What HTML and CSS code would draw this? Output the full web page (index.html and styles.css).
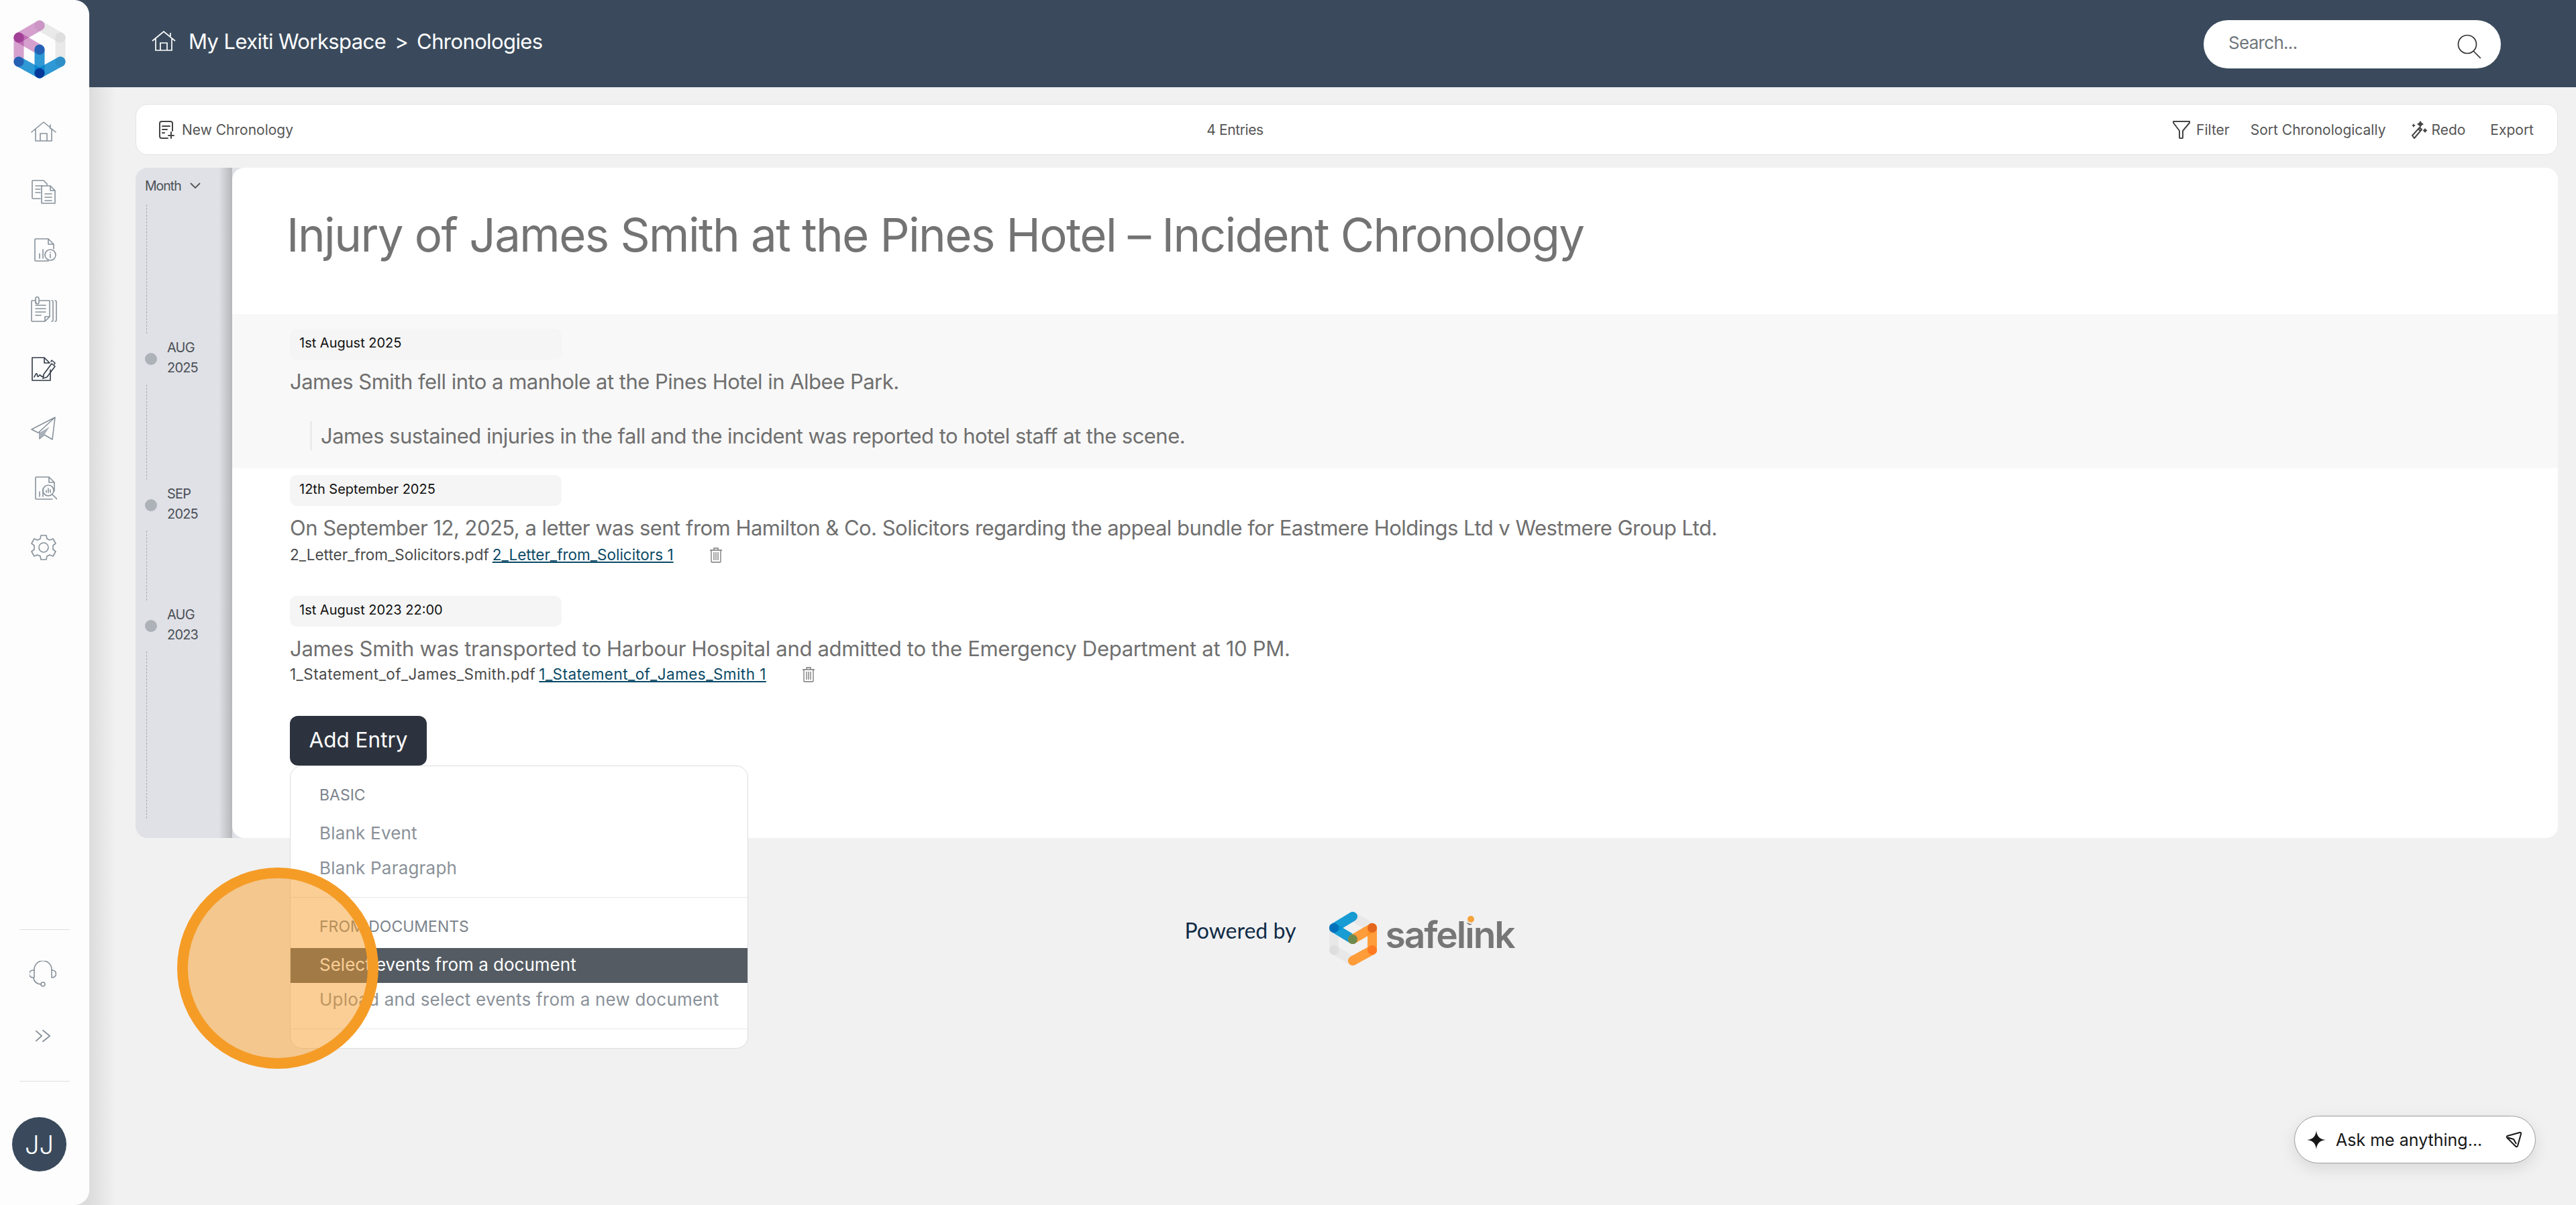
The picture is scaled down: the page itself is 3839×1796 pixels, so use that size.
FILE: index.html
```html
<!DOCTYPE html>
<html lang="en">
<head>
<meta charset="utf-8">
<title>Chronologies</title>
<link rel="stylesheet" href="styles.css">
</head>
<body>
<div class="app">
  <aside class="sidebar">
    <svg class="logo" viewBox="0 0 133 152" fill="none" stroke-width="15" stroke-linecap="round">
      <g stroke="#9b9b9b" stroke-opacity=".2"><path d="M59 38 90 56"/><path d="M90 56V92"/></g>
      <g stroke="#a52f94" stroke-opacity=".45"><path d="M59 38 28 56"/><path d="M28 56 59 74"/><path d="M28 56V92"/></g>
      <g stroke="#0083cc" stroke-opacity=".82"><path d="M28 92 59 109"/><path d="M59 109 90 92"/><path d="M59 74V109"/></g>
      <circle cx="59" cy="38" r="7.500" fill="#cb95c6"/>
      <circle cx="90" cy="56" r="7.500" fill="#dedede"/>
      <circle cx="28" cy="56" r="7.500" fill="#a23f96"/>
      <circle cx="59" cy="74" r="7.500" fill="#2560b4"/>
      <circle cx="28" cy="92" r="7.500" fill="#2560b4"/>
      <circle cx="90" cy="92" r="7.500" fill="#2e8fc8"/>
      <circle cx="59" cy="109" r="7.500" fill="#06389a"/>
    </svg>
    <nav class="nav">
      <a class="nav-item"><svg class="ico" viewBox="0 0 40 40"><path d="M2 21 20 6l18 15M8 16v18h24V16M15 34V23h10v11M30 10v6"/></svg></a>
      <a class="nav-item"><svg class="ico" viewBox="0 0 40 40"><path d="M15 31H4a1 1 0 0 1-1-1V5a1 1 0 0 1 1-1h16l5 5v2M8 12h10M8 17h7M8 22h7"/><path d="M17 12h13l7 7v19H17zM30 12v7h7M22 24h10M22 29h10M22 34h10"/></svg></a>
      <a class="nav-item"><svg class="ico" viewBox="0 0 40 40"><path d="M27 36H8a1 1 0 0 1-1-1V4a1 1 0 0 1 1-1h19l8 8v7M27 3v8h8M14 32V25M19 32V19"/><circle cx="30" cy="27" r="8"/><path d="M30 26v5M30 23v.6"/></svg></a>
      <a class="nav-item"><svg class="ico" viewBox="0 0 40 40"><path d="M8 6H3a1 1 0 0 0-1 1v29a1 1 0 0 0 1 1h19l7-7V6H14M22 37v-7h7M8 13h15M8 18h15M8 23h15M8 28h8"/><path d="M8 10V3a2.500 2.500 0 0 1 5 0v6a2 2 0 0 1-4 0"/><path d="M32 6c2 0 2 1 2 2v27c0 1 0 2-2 2M37 6c1.500 0 2 1 2 2v27c0 1-.5 2-2 2"/></svg></a>
      <a class="nav-item nav-active"><svg class="ico" viewBox="0 0 40 40"><path d="M30 20v16H3V2h18l8 8h-8V2M6 31c2-4 3-6 4-5s0 5 2 4 2-3 3-2 1 3 5 2"/><path d="m20 27 12-16 5 4-12 16-6 2zM31 8l1-2 5 4-1 2"/></svg></a>
      <a class="nav-item"><svg class="ico" viewBox="0 0 40 40"><path d="M37 3 2 21l10 5 25-23-4 33-12-7-7 6v-10"/><path class="ico-fill" d="m14 26 1 8 6-5 8-12z"/></svg></a>
      <a class="nav-item"><svg class="ico" viewBox="0 0 40 40"><path d="M36 24V11l-8-8H9a1 1 0 0 0-1 1v31a1 1 0 0 0 1 1h24M28 3v8h8M14 32v-7M19 32v-11"/><circle cx="27" cy="23" r="8"/><path d="M24 26v-3M27 26v-6M30 26v-4M33 29l7 7"/></svg></a>
      <a class="nav-item"><svg class="ico" viewBox="0 0 40 40"><circle cx="20" cy="20" r="7"/><path d="M16 2h8l1 5 4 2 5-2 4 7-4 3v6l4 3-4 7-5-2-4 2-1 5h-8l-1-5-4-2-5 2-4-7 4-3v-6l-4-3 4-7 5 2 4-2z"/></svg></a>
    </nav>
    <div class="side-foot">
      <hr class="side-rule">
      <a class="foot-btn foot-help"><svg class="ico" viewBox="0 0 40 40"><path d="M7 14v-1a13 13 0 0 1 26 0v1M6 26c1 6 6 9 11 9"/><path d="M7 14H5a5.500 5.500 0 0 0 0 11h2zM33 14h1a5.500 5.500 0 0 1 0 11h-1z"/><circle cx="20" cy="35" r="3"/></svg></a>
      <a class="foot-btn foot-more"><svg class="ico ico-sm" viewBox="0 0 26 20"><path d="m2 2 9 8-9 8M13 1l11 9-11 9"/></svg></a>
      <hr class="side-rule">
      <div class="avatar">JJ</div>
    </div>
  </aside>

  <div class="main">
    <header class="topbar">
      <div class="crumbs">
        <svg class="crumb-home" viewBox="0 0 36 30"><path d="M1 15 18 1l17 14M6 11v18h24V11M13 29V18h10v11M28 3v5"/></svg>
        <span>My Lexiti Workspace</span><span class="crumb-sep">&gt;</span><span>Chronologies</span>
      </div>
      <div class="search">
        <span class="search-text">Search...</span>
        <svg class="search-ico" viewBox="0 0 36 36"><circle cx="15" cy="15" r="13.500"/><path d="m24 25 11 11"/></svg>
      </div>
    </header>

    <div class="content">
      <div class="toolbar">
        <div class="tool"><svg class="tool-ico tool-new" viewBox="0 0 24 28"><path d="M21 16V5a3 3 0 0 0-3-3H5a3 3 0 0 0-3 3v19a3 3 0 0 0 3 3h9M6 9h11M6 14h7M6 19h3M19 18v9M15 23h8"/></svg><span>New Chronology</span></div>
        <div class="tool tool-count">4 Entries</div>
        <div class="tool-group">
          <div class="tool tool-filter"><svg class="tool-ico tool-fun" viewBox="0 0 26 28"><path d="M1 2h24v2L15 16v10a1 1 0 0 1-1 1h-3a1 1 0 0 1-1-1V16L1 4z"/></svg><span>Filter</span></div>
          <div class="tool">Sort Chronologically</div>
          <div class="tool tool-redo"><svg class="tool-ico tool-wand" viewBox="0 0 26 28"><path d="M3 23 14 11l3 3L6 27zM12 13l3 3"/><path class="tool-solid" d="m15 1 2 3 3 2-3 2-2 3-2-3-3-2 3-2zM22 12l1.500 2 2 1.500-2 1.500-1.500 2-1.500-2-2-1.500 2-1.500zM5 5l1 2 2 1-2 1-1 2-1-2-2-1 2-1z"/></svg><span>Redo</span></div>
          <div class="tool">Export</div>
        </div>
      </div>

      <div class="board">
        <div class="timeline">
          <div class="tl-mode"><span>Month</span><svg class="tl-chev" viewBox="0 0 16 10"><path d="m1 1 7 7 7-7"/></svg></div>
          <div class="tl-dash tl-dash-a"></div>
          <div class="tl-point"><i class="tl-dot"></i><span class="tl-label">AUG<br>2025</span></div>
          <div class="tl-dash tl-dash-b"></div>
          <div class="tl-point"><i class="tl-dot"></i><span class="tl-label">SEP<br>2025</span></div>
          <div class="tl-dash tl-dash-c"></div>
          <div class="tl-point"><i class="tl-dot"></i><span class="tl-label">AUG<br>2023</span></div>
          <div class="tl-dash tl-dash-d"></div>
        </div>

        <article class="card">
          <h1 class="title">Injury of James Smith at the Pines Hotel – Incident Chronology</h1>

          <section class="event event-hl">
            <div class="pill">1st August 2025</div>
            <p class="para">James Smith fell into a manhole at the Pines Hotel in Albee Park.</p>
            <blockquote class="quote">James sustained injuries in the fall and the incident was reported to hotel staff at the scene.</blockquote>
          </section>

          <section class="event">
            <div class="pill">12th September 2025</div>
            <p class="para">On September 12, 2025, a letter was sent from Hamilton &amp; Co. Solicitors regarding the appeal bundle for Eastmere Holdings Ltd v Westmere Group Ltd.</p>
            <div class="file"><span>2_Letter_from_Solicitors.pdf</span><a class="file-link">2_Letter_from_Solicitors 1</a><svg class="trash" viewBox="0 0 20 24"><path d="M1 5h18M7 5V2h6v3M3 5v17a1 1 0 0 0 1 1h12a1 1 0 0 0 1-1V5M7 8v12M10 8v12M13 8v12"/></svg></div>
          </section>

          <section class="event event-last">
            <div class="pill">1st August 2023 22:00</div>
            <p class="para">James Smith was transported to Harbour Hospital and admitted to the Emergency Department at 10 PM.</p>
            <div class="file"><span>1_Statement_of_James_Smith.pdf</span><a class="file-link">1_Statement_of_James_Smith 1</a><svg class="trash" viewBox="0 0 20 24"><path d="M1 5h18M7 5V2h6v3M3 5v17a1 1 0 0 0 1 1h12a1 1 0 0 0 1-1V5M7 8v12M10 8v12M13 8v12"/></svg></div>
          </section>

          <div class="add">
            <button class="add-btn">Add Entry</button>
            <div class="menu">
              <div class="menu-group">
                <div class="menu-head">BASIC</div>
                <div class="menu-item">Blank Event</div>
                <div class="menu-item">Blank Paragraph</div>
              </div>
              <div class="menu-group">
                <div class="menu-head">FROM DOCUMENTS</div>
                <div class="menu-item menu-on">Select events from a document</div>
                <div class="menu-item">Upload and select events from a new document</div>
              </div>
            </div>
          </div>
        </article>
      </div>

      <div class="powered">
        <span class="powered-text">Powered by</span>
        <svg class="powered-mark" viewBox="0 0 74 80" fill="none" stroke-width="14" stroke-linecap="round">
          <g stroke="#9b9b9b" stroke-opacity=".1"><path d="M36 7 65 24"/><path d="M8 24V57"/><path d="M8 57 36 73"/></g>
          <g stroke="#0092d0" stroke-opacity=".9"><path d="M36 7 8 24"/><path d="M8 24 36 41"/></g>
          <g stroke="#ff9326" stroke-opacity=".9"><path d="M36 41 65 24"/><path d="M65 24V57"/><path d="M65 57 36 73"/></g>
          <circle cx="8" cy="57" r="7" fill="#dedede"/>
          <circle cx="8" cy="24" r="7" fill="#0070ba"/>
          <circle cx="36" cy="41" r="7" fill="#6f8a4d"/>
          <circle cx="65" cy="24" r="7" fill="#e4671e"/>
          <circle cx="65" cy="57" r="7" fill="#ff7a20"/>
        </svg>
        <span class="brand">safel<span class="brand-i">i</span>nk</span>
      </div>
    </div>
  </div>
</div>

<div class="spot"></div>

<div class="ask">
  <svg class="ask-star" viewBox="0 0 28 28"><path d="M14 0c1 9 5 13 14 14-9 1-13 5-14 14-1-9-5-13-14-14 9-1 13-5 14-14z"/></svg>
  <span class="ask-text">Ask me anything...</span>
  <svg class="ask-send" viewBox="0 0 24 24"><path d="M3 6 21 1c1.500-.3 2.300.5 2 2l-5 18c-.5 1.500-2 1.500-3 .5L2.500 9C1.500 8 1.700 6.500 3 6zM3.500 8.500 12 11l4 7"/></svg>
</div>
</body>
</html>
```
FILE: styles.css
```css
* { box-sizing: border-box; }
html, body { margin: 0; height: 100%; }
body {
  font-family: Inter, "Liberation Sans", sans-serif;
  background: #f1f1f2;
  color: #6f6f6f;
  overflow: hidden;
}
.app { display: flex; height: 1796px; position: relative; }

/* sidebar */
.sidebar {
  width: 133px;
  flex: none;
  background: #fdfdfd;
  border-radius: 0 22px 22px 0;
  display: flex;
  flex-direction: column;
  position: relative;
  z-index: 3;
}
.logo { width: 133px; height: 152px; flex: none; display: block; }
.nav { display: flex; flex-direction: column; }
.nav-item { height: 88.6px; display: flex; align-items: center; justify-content: center; padding-right: 3px; }
.ico { width: 40px; height: 40px; fill: none; stroke: #87919b; stroke-width: 1.6; stroke-linecap: round; stroke-linejoin: round; }
.ico-fill { fill: #a9b0b8; stroke: none; }
.ico-sm { width: 24px; height: 20px; stroke-width: 2; }
.nav-active .ico { stroke: #2f3a46; }
.side-foot { margin-top: auto; display: flex; flex-direction: column; padding-bottom: 50px; }
.side-rule { width: 75px; margin: 0 auto; border: 0; border-top: 1px solid #dcdfe3; }
.foot-btn { display: flex; align-items: center; justify-content: center; padding-right: 5px; }
.foot-help { height: 132px; }
.foot-more { height: 52px; margin-bottom: 41px; }
.avatar {
  width: 81px;
  height: 81px;
  margin: 53px 0 0 18px;
  border-radius: 50%;
  background: #3a4a5c;
  color: #fff;
  font-size: 38px;
  font-weight: 300;
  display: flex;
  align-items: center;
  justify-content: center;
}

/* main */
.main { flex: 1; min-width: 0; margin-left: -20px; display: flex; flex-direction: column; }
.topbar {
  height: 130px;
  flex: none;
  background: #3a4a5c;
  padding: 0 112px 0 113px;
  display: flex;
  align-items: center;
  justify-content: space-between;
}
.crumbs { display: flex; align-items: center; margin-bottom: 8px; color: #fff; font-size: 31px; letter-spacing: -.6px; }
.crumb-home { width: 36px; height: 30px; margin-right: 19px; fill: none; stroke: #fff; stroke-width: 1.7; }
.crumb-sep { margin: 0 13px; }
.search {
  width: 443px;
  height: 72px;
  margin-top: 2px;
  background: #fff;
  border-radius: 36px;
  padding: 0 29px 0 37px;
  display: flex;
  align-items: center;
  justify-content: space-between;
}
.search-text { font-size: 26px; letter-spacing: -.7px; margin-bottom: 6px; color: #6f777c; }
.search-ico { width: 36px; height: 36px; fill: none; stroke: #333; stroke-width: 1.7; margin-top: 6px; }

.content {
  flex: 1;
  padding: 25px 27px 0 89px;
  background: linear-gradient(to right, #dcdcdd 20px, #f1f1f2 60px);
}
.toolbar {
  height: 76px;
  margin-bottom: 19px;
  background: #fff;
  border: 1px solid #e3e3e3;
  border-radius: 18px;
  padding: 0 35px 0 33px;
  display: flex;
  align-items: center;
  justify-content: space-between;
  font-size: 21px;
  color: #555;
}
.tool { display: flex; align-items: center; }
.tool-count { margin-left: 6px; letter-spacing: -.4px; }
.tool-ico { fill: none; stroke: #444; stroke-width: 2; stroke-linecap: round; stroke-linejoin: round; flex: none; }
.tool-new { width: 24px; height: 28px; margin-right: 11px; }
.tool-group { display: flex; align-items: center; gap: 37px; }
.tool-filter { margin-right: -6px; }
.tool-fun { width: 26px; height: 28px; margin-right: 9px; }
.tool-wand { width: 26px; height: 28px; margin-right: 5px; }
.tool-solid { fill: #444; stroke: none; }

/* board */
.board { display: grid; grid-template-columns: 144px 1fr; height: 999px; }
.timeline {
  margin-right: -20px;
  background: linear-gradient(to right, #e0e1e6 124px, #b6b7bb 144px, #e0e1e6 144px);
  border-radius: 18px 0 0 18px;
  padding: 12px 0 0 14px;
  color: #4b5058;
  font-size: 20px;
  letter-spacing: -.8px;
}
.tl-mode { height: 30px; display: flex; align-items: center; gap: 13px; font-size: 19.5px; letter-spacing: -1px; }
.tl-chev { width: 16px; height: 10px; fill: none; stroke: #555; stroke-width: 1.8; }
.tl-dash { margin-left: 2px; border-left: 1px dashed #a8abb2; }
.tl-dash-a { margin-top: 13px; height: 192px; }
.tl-dash-b { height: 142px; }
.tl-dash-c { height: 104px; }
.tl-dash-d { height: 249px; }
.tl-point { display: flex; align-items: center; gap: 15px; margin: 6px 0 10px; line-height: 30px; }
.tl-dot { width: 18px; height: 18px; margin-top: 3px; border-radius: 50%; background: #adb2b8; flex: none; }

.card { position: relative; background: #fff; border-radius: 18px; display: flex; flex-direction: column; }
.title {
  height: 218px;
  margin: 0;
  padding: 0 0 18px 81px;
  display: flex;
  align-items: center;
  color: #737373;
  font-size: 69px;
  font-weight: 400;
  letter-spacing: -1.6px;
  white-space: nowrap;
}
.event { padding: 0 0 0 86px; }
.event-hl { background: #f8f8f8; height: 230px; padding-top: 22px; }
.event-last { margin-top: 38px; }
.pill {
  width: 405px;
  height: 46px;
  margin-top: 10px;
  padding-left: 14px;
  background: #f5f5f5;
  border-radius: 10px;
  color: #111;
  font-size: 20px;
  line-height: 42px;
}
.event-hl .pill { margin-top: 0; }
.para { margin: 11px 0 0; font-size: 31px; line-height: 43px; letter-spacing: -.52px; white-space: nowrap; }
.event-last .para { letter-spacing: -.3px; }
.quote { margin: 38px 0 0 30px; padding-left: 13px; border-left: 3px solid #ebebeb; font-size: 31px; line-height: 43px; letter-spacing: -.55px; white-space: nowrap; }
.file { margin-top: 6px; font-size: 22.5px; line-height: 26px; color: #4a4a4a; display: flex; align-items: center; white-space: pre; }
.event-last .file { margin-top: 4px; letter-spacing: .45px; }
.file-link { margin-left: 5px; color: #0b4a66; text-decoration: underline; }
.trash { width: 20px; height: 24px; margin-left: 53px; fill: none; stroke: #777; stroke-width: 1.3; }

/* add entry */
.add { position: relative; margin: 49px 0 0 86px; width: 204px; }
.add-btn {
  width: 204px;
  height: 74px;
  padding: 0 0 4px;
  display: block;
  background: #2d333e;
  border: 0;
  border-radius: 12px;
  color: #fff;
  font: 400 31.5px Inter, "Liberation Sans", sans-serif;
}
.menu {
  position: absolute;
  z-index: 2;
  left: 0;
  top: 100%;
  width: 683px;
  height: 422px;
  background: #fff;
  border: 1px solid #dcdcdc;
  border-radius: 18px;
  padding-top: 23px;
  overflow: hidden;
  font-size: 26px;
  color: #8a9199;
}
.menu-group { padding-bottom: 16px; border-bottom: 1px solid #e8e8e8; margin-bottom: 23px; }
.menu-head { height: 40px; padding-left: 43px; margin-bottom: 12px; font-size: 23px; line-height: 40px; color: #7b838c; }
.menu-item { height: 52px; padding-left: 43px; line-height: 50px; letter-spacing: .2px; white-space: nowrap; }
.menu-on { background: #545b63; color: #fff; letter-spacing: 0; }

/* powered */
.powered { display: flex; align-items: center; justify-content: center; margin-top: 110px; padding-left: 8px; }
.powered-text { font-size: 32px; color: #0f2b46; margin: 0 49px 26px 0; font-family: Lato, sans-serif; }
.powered-mark { width: 74px; height: 80px; }
.brand { margin: 0 0 12px 10px; font-size: 55px; line-height: 60px; font-weight: 600; color: #767676; letter-spacing: -2px; }
.brand-i { position: relative; }
.brand-i::before { content: ""; position: absolute; left: 4px; top: 5px; width: 10px; height: 10px; border-radius: 50%; background: #f5a33b; box-shadow: 0 0 0 2px #f1f1f2; }

/* overlays */
.spot {
  position: absolute;
  z-index: 5;
  left: 264px;
  top: 1293px;
  width: 300px;
  height: 300px;
  border-radius: 50%;
  background: rgba(245, 156, 39, .49);
  border: 16px solid #f59c27;
}
.ask {
  position: absolute;
  z-index: 5;
  left: 3419px;
  top: 1663px;
  width: 360px;
  height: 71px;
  background: #fff;
  border: 1px solid #9c9c9c;
  border-radius: 36px;
  box-shadow: 0 8px 24px rgba(0, 0, 0, .1);
  padding: 0 20px 0 18px;
  display: flex;
  align-items: center;
  color: #171717;
  font-size: 25px;
}
.ask-star { width: 28px; height: 28px; fill: #171717; flex: none; }
.ask-text { margin-left: 15px; }
.ask-send { width: 24px; height: 24px; margin-left: auto; fill: none; stroke: #171717; stroke-width: 2; stroke-linejoin: round; }
```
